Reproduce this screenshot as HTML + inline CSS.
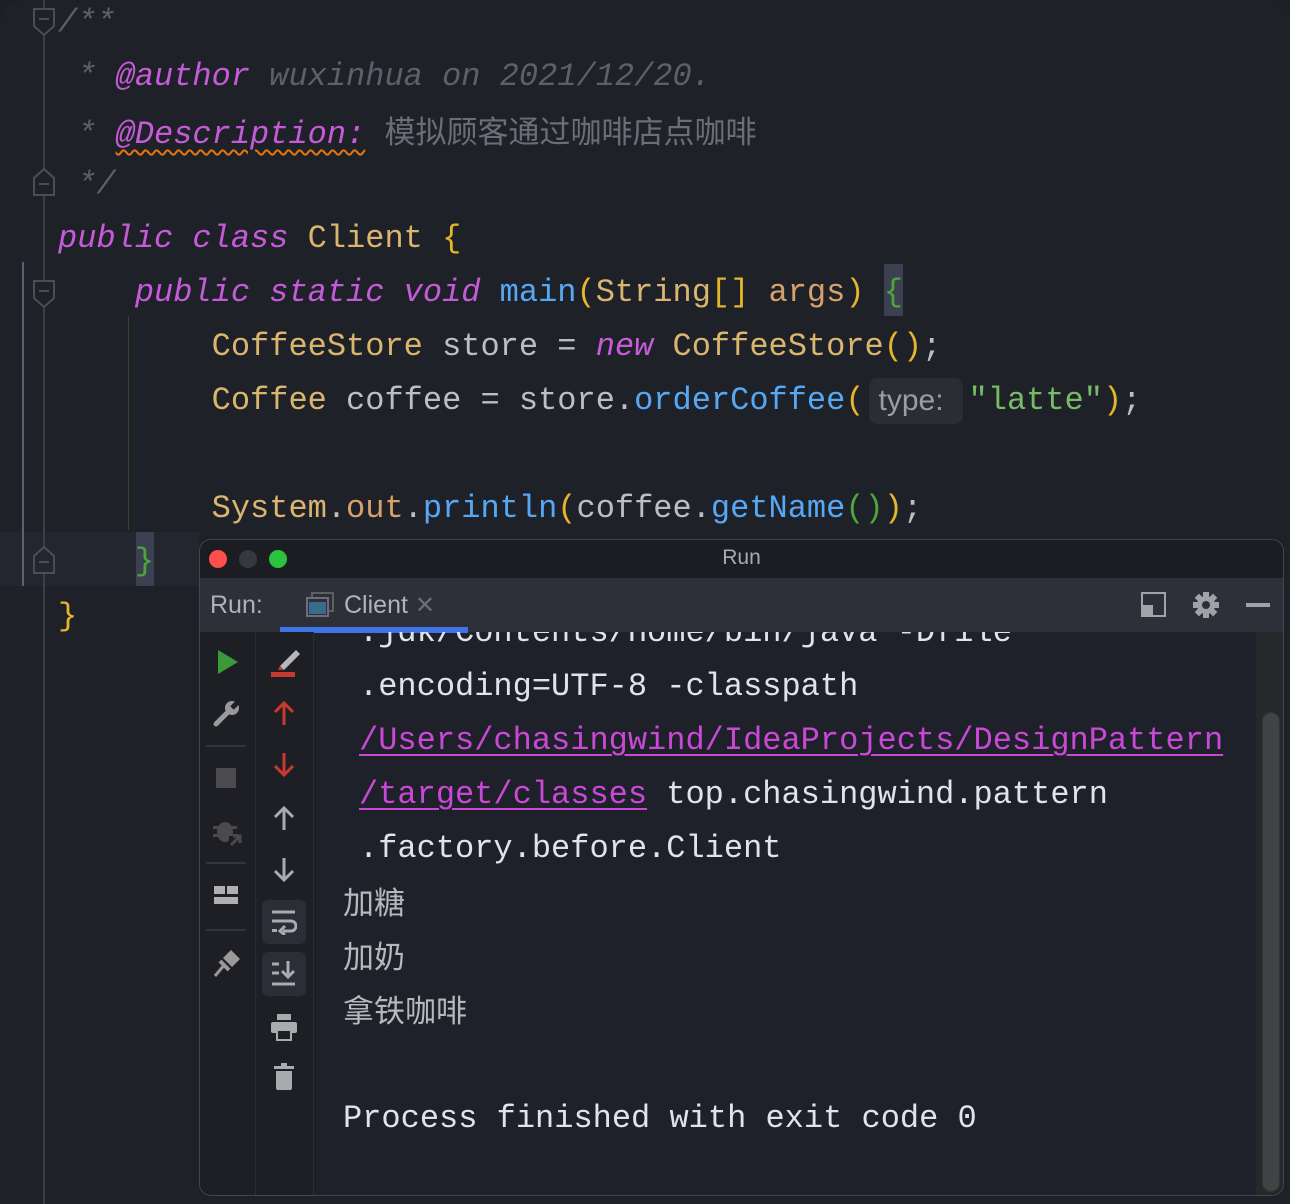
<!DOCTYPE html>
<html><head><meta charset="utf-8"><style>
*{margin:0;padding:0;box-sizing:border-box}
body{width:1290px;height:1204px;background:#1e1f22;overflow:hidden;position:relative;font-family:"Liberation Mono","Noto Sans CJK SC",monospace}
.ed{position:absolute;left:0;top:0;width:1290px;height:1204px;background:#1f2128;border-radius:22px 22px 0 0}
.l{position:absolute;left:58px;height:54px;line-height:54px;font-size:32px;white-space:pre;color:#bcbec4}
.k{color:#c55bd8;font-style:italic}
.c{color:#5c6069;font-style:italic}
.t{color:#c55bd8;font-style:italic}
.y{color:#d9b56e}
.b{color:#e5b52a}
.g{color:#4fa53c}
.m{color:#56a8f5}
.s{color:#76bb66}
.o{color:#d8a06b}
.cj{font-family:"Noto Sans CJK SC",sans-serif;font-style:normal;font-size:31px;color:#6a6e76}
.hint{display:inline-block;background:#2b2d33;color:#9a9da4;font-family:"Liberation Sans",sans-serif;font-size:30px;border-radius:8px;height:46px;line-height:46px;padding:0 10px;vertical-align:middle;margin:0 6px 0 4px;width:94px}
.fold{position:absolute;left:33px;width:22px;height:28px}
.panel{position:absolute;left:199px;top:539px;width:1085px;height:657px;background:#1f212a;border:1px solid #44464c;border-radius:12px;overflow:hidden}
.cl{position:absolute;left:143px;height:54px;line-height:54px;font-size:32px;white-space:pre;color:#dfe3ea}
.u{color:#c948d6;text-decoration:underline;text-decoration-thickness:2px;text-underline-offset:5px}
.zh{font-family:"Noto Sans CJK SC",sans-serif;color:#b7b8bb;font-size:31px}
</style></head><body>
<div class="ed"></div>
<div style="position:absolute;left:0;top:532px;width:199px;height:54px;background:#23262e"></div>
<div style="position:absolute;left:43px;top:0;width:2px;height:1204px;background:#3b3e45"></div>
<div style="position:absolute;left:22px;top:262px;width:2px;height:324px;background:#5a6272"></div>
<div style="position:absolute;left:128px;top:316px;width:1px;height:214px;background:#2e4a2e"></div>
<svg class="fold" style="top:8px" viewBox="0 0 22 28"><path d="M1 1H21V18L11 27L1 18Z" fill="#1f2128" stroke="#4a4d55" stroke-width="2"/><path d="M6 11H16" stroke="#4a4d55" stroke-width="2"/></svg>
<svg class="fold" style="top:168px" viewBox="0 0 22 28"><path d="M1 27H21V10L11 1L1 10Z" fill="#1f2128" stroke="#4a4d55" stroke-width="2"/><path d="M6 16H16" stroke="#4a4d55" stroke-width="2"/></svg>
<svg class="fold" style="top:280px" viewBox="0 0 22 28"><path d="M1 1H21V18L11 27L1 18Z" fill="#1f2128" stroke="#4a4d55" stroke-width="2"/><path d="M6 11H16" stroke="#4a4d55" stroke-width="2"/></svg>
<svg class="fold" style="top:546px" viewBox="0 0 22 28"><path d="M1 27H21V10L11 1L1 10Z" fill="#23262e" stroke="#4a4d55" stroke-width="2"/><path d="M6 16H16" stroke="#4a4d55" stroke-width="2"/></svg>
<div style="position:absolute;left:884px;top:264px;width:19px;height:52px;background:#3b4150"></div>
<div style="position:absolute;left:136px;top:532px;width:18px;height:54px;background:#3b4150"></div>

<div class="l c" style="top:-4px">/**</div>
<div class="l c" style="top:50px"> * <span class="t">@author</span> wuxinhua on 2021/12/20.</div>
<div class="l c" style="top:103px"> * <span class="t" style="text-decoration:underline wavy #e8750c;text-underline-offset:6px;text-decoration-thickness:2px">@Description:</span> <span class="cj">模拟顾客通过咖啡店点咖啡</span></div>
<div class="l c" style="top:158px"> */</div>
<div class="l" style="top:212px"><span class="k">public class</span> <span class="y">Client</span> <span class="b">{</span></div>
<div class="l" style="top:266px">    <span class="k">public static void</span> <span class="m">main</span><span class="b">(</span><span class="y">String</span><span class="b">[]</span> <span class="o">args</span><span class="b">)</span> <span class="g">{</span></div>
<div class="l" style="top:320px">        <span class="y">CoffeeStore</span> store = <span class="k">new</span> <span class="y">CoffeeStore</span><span class="b">()</span>;</div>
<div class="l" style="top:374px">        <span class="y">Coffee</span> coffee = store.<span class="m">orderCoffee</span><span class="b">(</span><span class="hint">type:</span><span class="s">"latte"</span><span class="b">)</span>;</div>
<div class="l" style="top:482px">        <span class="y">System</span>.<span class="o">out</span>.<span class="m">println</span><span class="b">(</span>coffee.<span class="m">getName</span><span class="g">()</span><span class="b">)</span>;</div>
<div class="l" style="top:535px">    <span class="g">}</span></div>
<div class="l" style="top:590px"><span class="b">}</span></div>

<div class="panel">
 <div style="position:absolute;left:0;top:0;width:100%;height:38px;background:#1b1d22"></div>
 <div style="position:absolute;left:9px;top:10px;width:18px;height:18px;border-radius:50%;background:#fe4f4a"></div>
 <div style="position:absolute;left:39px;top:10px;width:18px;height:18px;border-radius:50%;background:#36383d"></div>
 <div style="position:absolute;left:69px;top:10px;width:18px;height:18px;border-radius:50%;background:#2ac23f"></div>
 <div style="position:absolute;left:0;top:0;width:100%;height:38px;line-height:36px;text-align:center;font-family:'Liberation Sans',sans-serif;font-size:21px;color:#a8abb0">Run</div>
 <div style="position:absolute;left:0;top:38px;width:100%;height:54px;background:#2d3039"></div>
 <div style="position:absolute;left:10px;top:38px;height:54px;line-height:54px;font-family:'Liberation Sans',sans-serif;font-size:25px;color:#aeb1b7">Run:</div>
 <svg style="position:absolute;left:106px;top:52px" width="28" height="26" viewBox="0 0 28 26"><rect x="6" y="1" width="21" height="18" fill="none" stroke="#5b6068" stroke-width="2"/><rect x="1" y="6" width="21" height="18" fill="#2d3039" stroke="#6b7078" stroke-width="2"/><rect x="3" y="10" width="17" height="12" fill="#3c6a8a"/></svg>
 <div style="position:absolute;left:144px;top:38px;height:54px;line-height:54px;font-family:'Liberation Sans',sans-serif;font-size:25px;color:#b0b3b9">Client <span style="color:#6b6e74;font-size:24px">✕</span></div>
 <div style="position:absolute;left:80px;top:87px;width:188px;height:6px;background:#3f74e8"></div>
 <svg style="position:absolute;left:941px;top:52px" width="26" height="26"><rect x="1" y="1" width="23" height="23" fill="none" stroke="#a0a3a8" stroke-width="2"/><rect x="1" y="13" width="11" height="11" fill="#a0a3a8"/></svg>
 <svg style="position:absolute;left:992px;top:51px" width="28" height="28" viewBox="0 0 28 28"><g fill="#9fa2a7"><circle cx="14" cy="14" r="9"/><rect x="11" y="1" width="6" height="26"/><rect x="1" y="11" width="26" height="6"/><rect x="11" y="1" width="6" height="26" transform="rotate(45 14 14)"/><rect x="11" y="1" width="6" height="26" transform="rotate(-45 14 14)"/></g><circle cx="14" cy="14" r="4" fill="#2d3039"/></svg>
 <div style="position:absolute;left:1046px;top:63px;width:24px;height:4px;background:#a0a3a8"></div>

 <div style="position:absolute;left:0;top:92px;width:56px;height:570px;background:#1d1f25;border-right:1px solid #2c2e34"></div>
 <div style="position:absolute;left:57px;top:92px;width:57px;height:570px;background:#1d1f25;border-right:1px solid #2c2e34"></div>
 <div style="position:absolute;left:1056px;top:92px;width:30px;height:570px;background:#26282c"></div>
 <div style="position:absolute;left:1062px;top:172px;width:18px;height:480px;border-radius:9px;background:#424345;border:1px solid #333"></div>

 <svg style="position:absolute;left:17px;top:109px" width="22" height="26"><path d="M1 1L21 13L1 25Z" fill="#3a9a3a"/></svg>
 <svg style="position:absolute;left:13px;top:159px" width="28" height="28" viewBox="0 0 28 28"><path d="M3 25L14 14" stroke="#9a9a9a" stroke-width="5" stroke-linecap="round"/><circle cx="19" cy="9" r="7" fill="#9a9a9a"/><path d="M19 9L26 2" stroke="#1d1f25" stroke-width="5"/></svg>
 <div style="position:absolute;left:6px;top:205px;width:40px;height:2px;background:#33353a"></div>
 <div style="position:absolute;left:16px;top:228px;width:20px;height:20px;background:#4c4c4e"></div>
 <svg style="position:absolute;left:13px;top:276px" width="30" height="30" viewBox="0 0 30 30"><g fill="#4a4a4c"><ellipse cx="12" cy="16" rx="8" ry="10"/><rect x="0" y="10" width="24" height="3"/><rect x="0" y="18" width="24" height="3"/><path d="M16 20L28 20L28 30L16 30Z" fill="#1d1f25"/><path d="M18 29L27 20M20 20H27V27" stroke="#4a4a4c" stroke-width="3" fill="none"/></g></svg>
 <div style="position:absolute;left:6px;top:322px;width:40px;height:2px;background:#33353a"></div>
 <div style="position:absolute;left:14px;top:346px;width:11px;height:8px;background:#b0b0b2"></div>
 <div style="position:absolute;left:27px;top:346px;width:11px;height:8px;background:#b0b0b2"></div>
 <div style="position:absolute;left:14px;top:357px;width:24px;height:7px;background:#b0b0b2"></div>
 <div style="position:absolute;left:6px;top:389px;width:40px;height:2px;background:#33353a"></div>
 <svg style="position:absolute;left:13px;top:408px" width="28" height="30"><path d="M2 28L12 16" stroke="#9a9a9a" stroke-width="3"/><path d="M10 10L18 2L27 11L19 19Z" fill="#9a9a9a"/><path d="M7 13L16 22" stroke="#9a9a9a" stroke-width="4"/></svg>

 <svg style="position:absolute;left:70px;top:108px" width="32" height="30"><path d="M10 18L26 2L30 6L14 22Z" fill="#b8b8b8"/><path d="M10 18L14 22L8 22Z" fill="#c83a30"/><rect x="1" y="24" width="24" height="5" fill="#c8392f"/></svg>
 <svg style="position:absolute;left:73px;top:160px" width="22" height="26"><path d="M11 25V3M2 12L11 3L20 12" fill="none" stroke="#c8392f" stroke-width="3"/></svg>
 <svg style="position:absolute;left:73px;top:212px" width="22" height="26"><path d="M11 1V23M2 14L11 23L20 14" fill="none" stroke="#c8392f" stroke-width="3"/></svg>
 <svg style="position:absolute;left:73px;top:265px" width="22" height="26"><path d="M11 25V3M2 12L11 3L20 12" fill="none" stroke="#a9abae" stroke-width="3"/></svg>
 <svg style="position:absolute;left:73px;top:317px" width="22" height="26"><path d="M11 1V23M2 14L11 23L20 14" fill="none" stroke="#a9abae" stroke-width="3"/></svg>
 <div style="position:absolute;left:62px;top:360px;width:44px;height:44px;border-radius:6px;background:#2b2e36"></div>
 <svg style="position:absolute;left:71px;top:369px" width="26" height="26"><path d="M1 3H24M1 12H20a5 5 0 0 1 0 10H12" fill="none" stroke="#a9abae" stroke-width="3"/><path d="M14 17L9 22L14 26" fill="none" stroke="#a9abae" stroke-width="3"/><rect x="1" y="20" width="5" height="3" fill="#a9abae"/></svg>
 <div style="position:absolute;left:62px;top:412px;width:44px;height:44px;border-radius:6px;background:#2b2e36"></div>
 <svg style="position:absolute;left:71px;top:420px" width="26" height="28"><path d="M1 4H8M1 13H8M1 24H24" stroke="#a9abae" stroke-width="3"/><path d="M17 1V17M11 11L17 17L23 11" fill="none" stroke="#a9abae" stroke-width="3"/></svg>
 <svg style="position:absolute;left:70px;top:473px" width="28" height="28"><rect x="7" y="1" width="14" height="6" fill="#a9abae"/><rect x="1" y="9" width="26" height="11" rx="2" fill="#a9abae"/><rect x="7" y="17" width="14" height="10" fill="#1d1f25" stroke="#a9abae" stroke-width="2"/></svg>
 <svg style="position:absolute;left:74px;top:523px" width="20" height="28"><rect x="0" y="3" width="20" height="3" fill="#a9abae"/><rect x="7" y="0" width="6" height="3" fill="#a9abae"/><path d="M2 8H18V25Q18 27 16 27H4Q2 27 2 25Z" fill="#a9abae"/></svg>

 <div style="position:absolute;left:114px;top:92px;width:942px;height:570px;overflow:hidden">
  <div class="cl" style="left:45px;top:-26px">.jdk/Contents/Home/bin/java -Dfile</div>
  <div class="cl" style="left:45px;top:28px">.encoding=UTF-8 -classpath</div>
  <div class="cl" style="left:45px;top:82px"><span class="u">/Users/chasingwind/IdeaProjects/DesignPattern</span></div>
  <div class="cl" style="left:45px;top:136px"><span class="u">/target/classes</span> top.chasingwind.pattern</div>
  <div class="cl" style="left:45px;top:190px">.factory.before.Client</div>
  <div class="cl zh" style="left:29px;top:242px">加糖</div>
  <div class="cl zh" style="left:29px;top:296px">加奶</div>
  <div class="cl zh" style="left:29px;top:350px">拿铁咖啡</div>
  <div class="cl" style="left:29px;top:460px">Process finished with exit code 0</div>
 </div>
</div>
</body></html>
